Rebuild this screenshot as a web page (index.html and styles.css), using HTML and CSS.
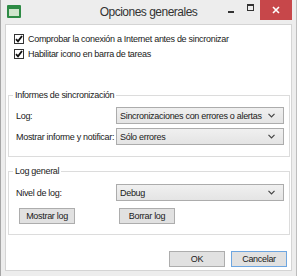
FILE: index.html
```html
<!DOCTYPE html>
<html lang="es">
<head>
  <meta charset="UTF-8">
  <title>Opciones generales</title>
  <link rel="stylesheet" href="styles.css">
</head>
<body>
  <div class="window">
    <div class="titlebar">
      <div class="title-left">
        <svg class="app-icon" width="14" height="13" viewBox="0 0 14 13">
          <rect x="0" y="0" width="14" height="13" rx="1" fill="#2e8b45"/>
          <rect x="2" y="4" width="10" height="7" fill="#cfe5cc"/>
        </svg>
      </div>
      <div class="title">Opciones generales</div>
      <div class="controls">
        <span class="ctl-min"></span>
        <span class="ctl-max"></span>
        <span class="ctl-close">
          <svg width="8" height="8" viewBox="0 0 8 8">
            <path d="M1 1 L7 7 M7 1 L1 7" stroke="#fff" stroke-width="1.6"/>
          </svg>
        </span>
      </div>
    </div>

    <div class="client">
      <label class="check-row">
        <span class="check"><svg width="8" height="8" viewBox="0 0 8 8"><path d="M1 4.2 L3 6.4 L7 1" stroke="#111" stroke-width="1.8" fill="none"/></svg></span>
        Comprobar la conexión a Internet antes de sincronizar
      </label>
      <label class="check-row">
        <span class="check"><svg width="8" height="8" viewBox="0 0 8 8"><path d="M1 4.2 L3 6.4 L7 1" stroke="#111" stroke-width="1.8" fill="none"/></svg></span>
        Habilitar icono en barra de tareas
      </label>

      <fieldset class="group group-sync">
        <legend>Informes de sincronización</legend>
        <div class="form-grid">
          <span class="label">Log:</span>
          <div class="combo">Sincronizaciones con errores o alertas<svg class="arrow" width="7" height="5" viewBox="0 0 7 5"><path d="M0.5 0.8 L3.5 3.8 L6.5 0.8" stroke="#444" stroke-width="1.2" fill="none"/></svg></div>
          <span class="label">Mostrar informe y notificar:</span>
          <div class="combo">Sólo errores<svg class="arrow" width="7" height="5" viewBox="0 0 7 5"><path d="M0.5 0.8 L3.5 3.8 L6.5 0.8" stroke="#444" stroke-width="1.2" fill="none"/></svg></div>
        </div>
      </fieldset>

      <fieldset class="group group-log">
        <legend>Log general</legend>
        <div class="form-grid">
          <span class="label">Nivel de log:</span>
          <div class="combo">Debug<svg class="arrow" width="7" height="5" viewBox="0 0 7 5"><path d="M0.5 0.8 L3.5 3.8 L6.5 0.8" stroke="#444" stroke-width="1.2" fill="none"/></svg></div>
          <div class="cell"><button class="btn">Mostrar log</button></div>
          <div class="cell"><button class="btn">Borrar log</button></div>
        </div>
      </fieldset>

      <div class="actions">
        <button class="btn">OK</button>
        <button class="btn btn-focus">Cancelar</button>
      </div>
    </div>
  </div>
</body>
</html>
```

FILE: styles.css
```css
/* Window frame */
body {
  margin: 0;
  font-family: "Liberation Sans", Arial, sans-serif;
  font-size: 9px;
  color: #1a1a1a;
  background: #ececec;
}

.window {
  width: 297px;
  height: 276px;
  box-sizing: border-box;
  background: #ededed;
  border-left: 1px solid #a6a6a6;
  border-right: 1px solid #bdbdbd;
  display: flex;
  flex-direction: column;
}

.titlebar {
  height: 24px;
  display: grid;
  grid-template-columns: 1fr auto 1fr;
  align-items: start;
}

.title-left {
  padding: 5px 0 0 6px;
}

.app-icon {
  display: block;
}

.title {
  font-size: 12px;
  letter-spacing: -0.5px;
  color: #333;
  padding-top: 5px;
}

.controls {
  display: flex;
  justify-content: flex-end;
  align-items: flex-start;
  padding-right: 4px;
}

.ctl-min {
  width: 6px;
  height: 2px;
  background: #333;
  margin: 11px 13px 0 0;
}

.ctl-max {
  width: 5px;
  height: 4px;
  border: 1px solid #333;
  border-top-width: 2px;
  margin: 4px 6px 0 0;
}

.ctl-close {
  width: 32px;
  height: 20px;
  background: #c7474a;
  display: flex;
  align-items: center;
  justify-content: center;
}

/* Client area */
.client {
  flex: 1;
  margin: 0 4px 5px 4px;
  background: #fff;
  border: 1px solid #d4d4d4;
  padding: 6px 1px 0 2px;
  display: flex;
  flex-direction: column;
}

.check-row {
  height: 15px;
  display: flex;
  align-items: center;
  gap: 4px;
  padding-left: 6px;
  letter-spacing: -0.3px;
}

.check {
  width: 8px;
  height: 8px;
  border: 1px solid #333;
  background: #fff;
  display: flex;
  align-items: center;
  justify-content: center;
}

.group {
  margin: 0;
  padding: 0 5px 0 7px;
  border: 1px solid #dcdcdc;
  min-width: 0;
}

.group legend {
  padding: 0 2px;
  margin-left: -3px;
  letter-spacing: -0.3px;
  line-height: 11px;
}

.group-sync {
  margin-top: 29px;
  padding-top: 6px;
  padding-bottom: 11px;
}

.group-log {
  margin-top: 9px;
  padding-top: 7px;
  padding-bottom: 10px;
}

.form-grid {
  display: grid;
  grid-template-columns: 100px 1fr;
  row-gap: 4px;
  align-items: center;
}

.label {
  letter-spacing: -0.3px;
  white-space: nowrap;
}

.combo {
  height: 17px;
  box-sizing: border-box;
  border: 1px solid #acacac;
  background: linear-gradient(#f0f0f0, #e4e4e4);
  display: flex;
  align-items: center;
  padding-left: 3px;
  letter-spacing: -0.3px;
}

.arrow {
  margin-left: auto;
  margin-right: 8px;
}

.group-log .form-grid {
  row-gap: 7px;
}

.cell {
  padding-left: 3px;
}

.btn {
  width: 56px;
  height: 16px;
  box-sizing: border-box;
  border: 1px solid #adadad;
  background: #e1e1e1;
  font-family: inherit;
  font-size: 9px;
  letter-spacing: -0.3px;
  color: #1a1a1a;
  padding: 0;
}

.btn-focus {
  border-color: #6ea6e0;
}

.actions {
  display: flex;
  justify-content: flex-end;
  gap: 6px;
  margin-top: 16px;
  padding-right: 3px;
}
```
